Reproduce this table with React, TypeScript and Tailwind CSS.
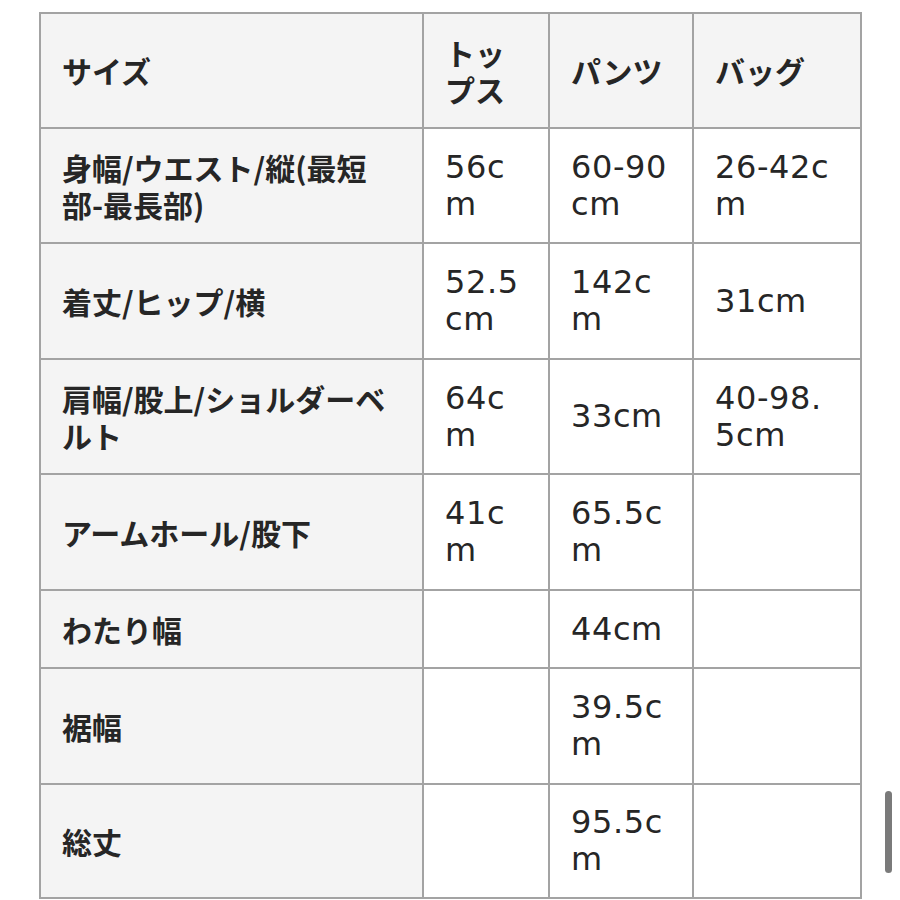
import React from "react";

const cjk = "font-['Noto_Sans_CJK_JP','Noto_Sans_CJK_SC',sans-serif]";
const lat = "font-['DejaVu_Sans','Noto_Sans_CJK_JP',sans-serif]";

type Cell = { lines: string[]; latin?: boolean };

const header: Cell[] = [
  { lines: ["サイズ"] },
  { lines: ["トッ", "プス"] },
  { lines: ["パンツ"] },
  { lines: ["バッグ"] },
];

const rows: Cell[][] = [
  [
    { lines: ["身幅/ウエスト/縦(最短", "部-最長部)"] },
    { lines: ["56c", "m"], latin: true },
    { lines: ["60-90", "cm"], latin: true },
    { lines: ["26-42c", "m"], latin: true },
  ],
  [
    { lines: ["着丈/ヒップ/横"] },
    { lines: ["52.5", "cm"], latin: true },
    { lines: ["142c", "m"], latin: true },
    { lines: ["31cm"], latin: true },
  ],
  [
    { lines: ["肩幅/股上/ショルダーベ", "ルト"] },
    { lines: ["64c", "m"], latin: true },
    { lines: ["33cm"], latin: true },
    { lines: ["40-98.", "5cm"], latin: true },
  ],
  [
    { lines: ["アームホール/股下"] },
    { lines: ["41c", "m"], latin: true },
    { lines: ["65.5c", "m"], latin: true },
    { lines: [] },
  ],
  [
    { lines: ["わたり幅"] },
    { lines: [] },
    { lines: ["44cm"], latin: true },
    { lines: [] },
  ],
  [
    { lines: ["裾幅"] },
    { lines: [] },
    { lines: ["39.5c", "m"], latin: true },
    { lines: [] },
  ],
  [
    { lines: ["総丈"] },
    { lines: [] },
    { lines: ["95.5c", "m"], latin: true },
    { lines: [] },
  ],
];

function CellView({ cell, shaded }: { cell: Cell; shaded: boolean }) {
  return (
    <div
      className={`flex items-center border-r-2 border-b-2 border-[#a3a3a3] pl-[21px] pr-2 ${
        shaded ? "bg-[#f4f4f4]" : "bg-white"
      }`}
    >
      <div
        className={`whitespace-nowrap leading-[37px] text-[#262626] ${
          cell.latin
            ? `${lat} text-[32px] tracking-[0.6px]`
            : `${cjk} text-[30px] font-bold text-[#2e2e2e]`
        }`}
      >
        {cell.lines.map((l, i) => (
          <div key={i}>{l}</div>
        ))}
      </div>
    </div>
  );
}

export default function App() {
  return (
    <div className="relative h-[900px] w-[900px] overflow-hidden bg-white">
      <div className="pl-[39px] pt-[12px]">
        <div className="grid w-fit grid-cols-[383px_126px_144px_168px] grid-rows-[115px_115px_116px_115px_116px_78px_116px_114px] border-l-2 border-t-2 border-[#a3a3a3]">
          {header.map((c, i) => (
            <CellView key={`h${i}`} cell={c} shaded={true} />
          ))}
          {rows.map((r, ri) =>
            r.map((c, ci) => (
              <CellView key={`${ri}-${ci}`} cell={c} shaded={ci === 0} />
            ))
          )}
        </div>
      </div>
      <div className="absolute left-[885px] top-[791px] h-[82px] w-[7px] rounded-full bg-[#7a7a7a]" />
    </div>
  );
}
